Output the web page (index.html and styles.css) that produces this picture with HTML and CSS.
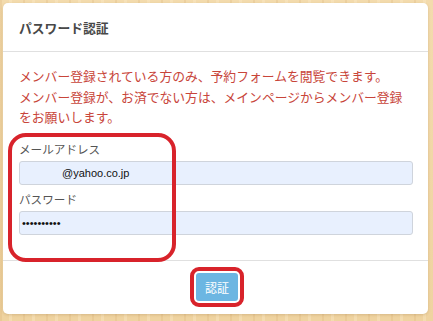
FILE: index.html
```html
<!DOCTYPE html>
<html lang="ja">
<head>
    <meta charset="UTF-8" />
    <meta name="viewport" content="width=device-width, initial-scale=1.0" />
    <title>パスワード認証</title>
    <link rel="stylesheet" href="styles.css">
</head>
<body>

    <div class="modal">
        <div class="modal-header">
            <h2 class="modal-title">パスワード認証</h2>
        </div>

        <div class="modal-body">
            <p class="notice">メンバー登録されている方のみ、予約フォームを閲覧できます。<br>メンバー登録が、お済でない方は、メインページからメンバー登録をお願いします。</p>

            <div class="form-group">
                <label class="form-label">メールアドレス</label>
                <div class="form-input email">@yahoo.co.jp</div>
            </div>
            <div class="form-group">
                <label class="form-label">パスワード</label>
                <div class="form-input secret">••••••••••</div>
            </div>

            <span class="mark mark-form"></span>
        </div>

        <div class="modal-footer">
            <div class="btn-wrap">
                <button class="btn">認証</button>
                <span class="mark mark-btn"></span>
            </div>
        </div>
    </div>

</body>
</html>
```

FILE: styles.css
```css
body {
    margin: 0;
    padding: 3px 5px 7px 3px;
    font-family: "Noto Sans CJK JP", "Noto Sans", sans-serif;
    background-color: #f2d8a8;
    background-image:
        repeating-linear-gradient(90deg, rgba(214, 170, 110, 0.22) 0 2px, transparent 2px 9px, rgba(255, 240, 210, 0.3) 9px 12px, transparent 12px 23px),
        linear-gradient(180deg, #f3dbad, #efd3a0);
}

.modal {
    background: #fff;
    border-radius: 5px;
    height: 311px;
    display: flex;
    flex-direction: column;
    box-shadow: 0 1px 3px rgba(120, 80, 30, 0.2);
}

.modal-header {
    height: 48px;
    padding: 0 16px;
    display: flex;
    align-items: center;
    border-bottom: 1px solid #e0e0e0;
}

.modal-title {
    margin: 0;
    font-size: 12.8px;
    font-weight: 700;
    color: #484848;
}

.modal-body {
    position: relative;
    flex: 1;
    padding: 14px 15px 0 16px;
}

.notice {
    margin: 0 0 13px;
    font-size: 12.8px;
    line-height: 20.5px;
    color: #c8453a;
}

.form-group {
    display: flex;
    flex-direction: column;
}

.form-label {
    font-size: 11.6px;
    line-height: 17px;
    color: #555;
    margin-bottom: 3px;
}

.form-input {
    height: 22px;
    border: 1px solid #cfd4dc;
    border-radius: 3px;
    background: #e8f0fe;
    font-family: "Liberation Sans", Arial, sans-serif;
    font-size: 11px;
    line-height: 22px;
    color: #111;
    padding: 0 6px;
}

.form-input.email {
    padding-left: 42px;
    margin-bottom: 6px;
}

.form-input.secret {
    font-size: 11px;
    padding-left: 2px;
}

.modal-footer {
    height: 54px;
    border-top: 1px solid #e0e0e0;
    display: flex;
    justify-content: center;
    align-items: flex-start;
    padding-top: 12px;
    box-sizing: border-box;
}

.btn-wrap {
    position: relative;
    margin-left: 3px;
}

.btn {
    display: block;
    width: 42px;
    height: 28px;
    border: none;
    border-radius: 3px;
    background: #6cb6e2;
    color: #fff;
    font-family: "Noto Sans CJK JP", sans-serif;
    font-size: 12px;
    padding: 0;
}

/* red hand-drawn highlight marks */
.mark {
    position: absolute;
    border: 4px solid #d8232b;
    pointer-events: none;
}

.mark-form {
    left: 5px;
    top: 81px;
    width: 160px;
    height: 121px;
    border-radius: 18px;
}

.mark-btn {
    left: -6px;
    top: -6px;
    width: 46px;
    height: 32px;
    border-radius: 9px;
}
```
